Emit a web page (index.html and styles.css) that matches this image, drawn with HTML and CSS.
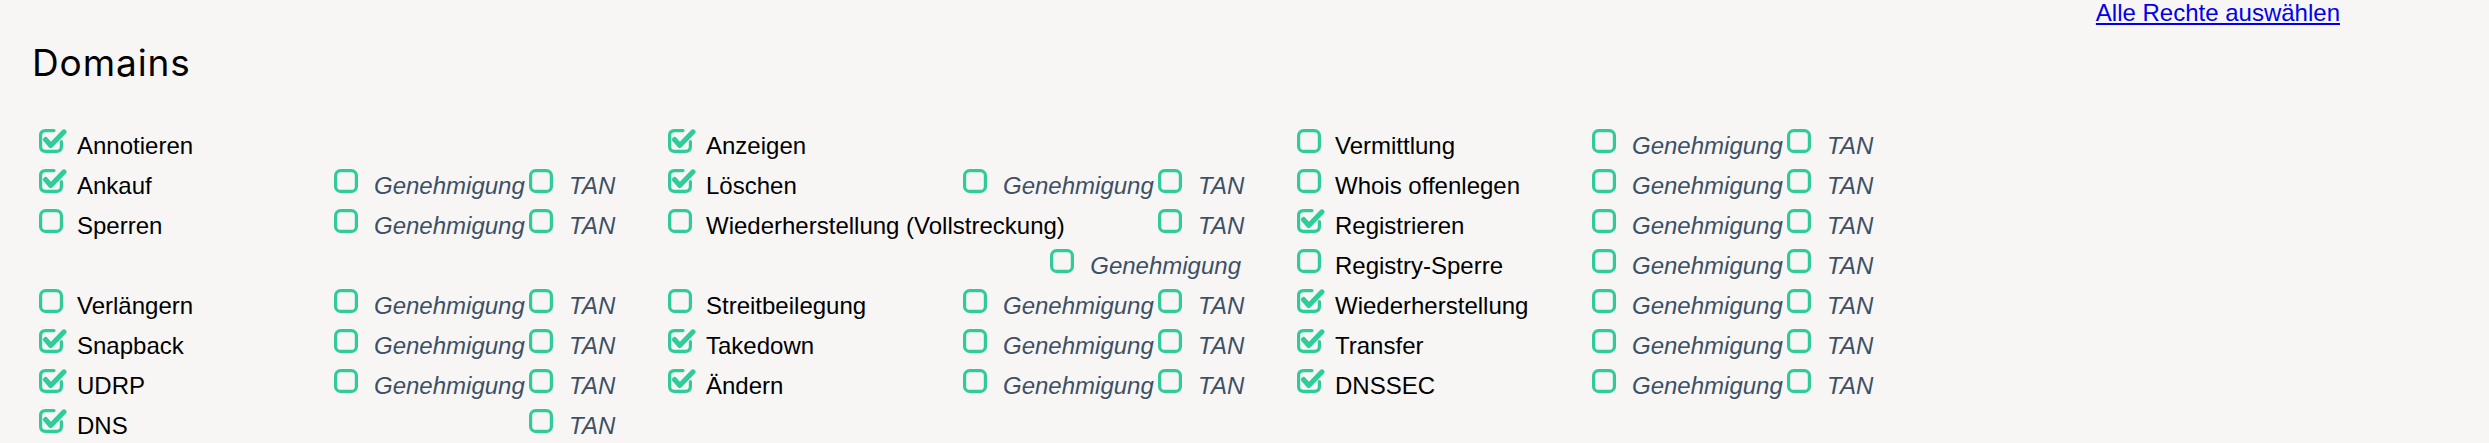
FILE: index.html
```html
<!DOCTYPE html>
<html lang="de">
<head>
  <meta charset="UTF-8" />
  <title>Domains – Rechte</title>
  <link rel="stylesheet" href="styles.css">
</head>
<body>
  <svg class="defs" width="0" height="0">
    <symbol id="on" viewBox="0 0 28 24">
      <path d="M15 1.6H6.5Q1.6 1.6 1.6 6.5V17.5Q1.6 22.4 6.5 22.4H17.5Q22.4 22.4 22.4 17.5V12.5" fill="none" stroke="currentColor" stroke-width="3.2" stroke-linecap="round"/>
      <path d="M6.5 10.5L11.8 16.5L25 2.8" fill="none" stroke="currentColor" stroke-width="5" stroke-linecap="round" stroke-linejoin="round"/>
    </symbol>
    <symbol id="off" viewBox="0 0 28 24">
      <rect x="1.6" y="1.6" width="20.8" height="20.8" rx="5" fill="none" stroke="currentColor" stroke-width="3.2"/>
    </symbol>
  </svg>

  <div class="top"><a href="#">Alle Rechte auswählen</a></div>
  <h1>Domains</h1>

  <div class="grid">
    <div class="col">
      <div class="row">
        <label class="right"><svg class="cb"><use href="#on"/></svg>Annotieren</label>
      </div>
      <div class="row">
        <label class="right"><svg class="cb"><use href="#on"/></svg>Ankauf</label>
        <span class="opt"><svg class="cb"><use href="#off"/></svg>Genehmigung</span>
        <span class="opt tan"><svg class="cb"><use href="#off"/></svg>TAN</span>
      </div>
      <div class="row">
        <label class="right"><svg class="cb"><use href="#off"/></svg>Sperren</label>
        <span class="opt"><svg class="cb"><use href="#off"/></svg>Genehmigung</span>
        <span class="opt tan"><svg class="cb"><use href="#off"/></svg>TAN</span>
      </div>
      <div class="row"></div>
      <div class="row">
        <label class="right"><svg class="cb"><use href="#off"/></svg>Verlängern</label>
        <span class="opt"><svg class="cb"><use href="#off"/></svg>Genehmigung</span>
        <span class="opt tan"><svg class="cb"><use href="#off"/></svg>TAN</span>
      </div>
      <div class="row">
        <label class="right"><svg class="cb"><use href="#on"/></svg>Snapback</label>
        <span class="opt"><svg class="cb"><use href="#off"/></svg>Genehmigung</span>
        <span class="opt tan"><svg class="cb"><use href="#off"/></svg>TAN</span>
      </div>
      <div class="row">
        <label class="right"><svg class="cb"><use href="#on"/></svg>UDRP</label>
        <span class="opt"><svg class="cb"><use href="#off"/></svg>Genehmigung</span>
        <span class="opt tan"><svg class="cb"><use href="#off"/></svg>TAN</span>
      </div>
      <div class="row">
        <label class="right"><svg class="cb"><use href="#on"/></svg>DNS</label>
        <span class="opt tan"><svg class="cb"><use href="#off"/></svg>TAN</span>
      </div>
    </div>

    <div class="col">
      <div class="row">
        <label class="right"><svg class="cb"><use href="#on"/></svg>Anzeigen</label>
      </div>
      <div class="row">
        <label class="right"><svg class="cb"><use href="#on"/></svg>Löschen</label>
        <span class="opt"><svg class="cb"><use href="#off"/></svg>Genehmigung</span>
        <span class="opt tan"><svg class="cb"><use href="#off"/></svg>TAN</span>
      </div>
      <div class="row wrap">
        <label class="right"><svg class="cb"><use href="#off"/></svg>Wiederherstellung (Vollstreckung)</label>
        <span class="opt tan"><svg class="cb"><use href="#off"/></svg>TAN</span>
        <span class="opt late"><svg class="cb"><use href="#off"/></svg>Genehmigung</span>
      </div>
      <div class="row">
        <label class="right"><svg class="cb"><use href="#off"/></svg>Streitbeilegung</label>
        <span class="opt"><svg class="cb"><use href="#off"/></svg>Genehmigung</span>
        <span class="opt tan"><svg class="cb"><use href="#off"/></svg>TAN</span>
      </div>
      <div class="row">
        <label class="right"><svg class="cb"><use href="#on"/></svg>Takedown</label>
        <span class="opt"><svg class="cb"><use href="#off"/></svg>Genehmigung</span>
        <span class="opt tan"><svg class="cb"><use href="#off"/></svg>TAN</span>
      </div>
      <div class="row">
        <label class="right"><svg class="cb"><use href="#on"/></svg>Ändern</label>
        <span class="opt"><svg class="cb"><use href="#off"/></svg>Genehmigung</span>
        <span class="opt tan"><svg class="cb"><use href="#off"/></svg>TAN</span>
      </div>
    </div>

    <div class="col">
      <div class="row">
        <label class="right"><svg class="cb"><use href="#off"/></svg>Vermittlung</label>
        <span class="opt"><svg class="cb"><use href="#off"/></svg>Genehmigung</span>
        <span class="opt tan"><svg class="cb"><use href="#off"/></svg>TAN</span>
      </div>
      <div class="row">
        <label class="right"><svg class="cb"><use href="#off"/></svg>Whois offenlegen</label>
        <span class="opt"><svg class="cb"><use href="#off"/></svg>Genehmigung</span>
        <span class="opt tan"><svg class="cb"><use href="#off"/></svg>TAN</span>
      </div>
      <div class="row">
        <label class="right"><svg class="cb"><use href="#on"/></svg>Registrieren</label>
        <span class="opt"><svg class="cb"><use href="#off"/></svg>Genehmigung</span>
        <span class="opt tan"><svg class="cb"><use href="#off"/></svg>TAN</span>
      </div>
      <div class="row">
        <label class="right"><svg class="cb"><use href="#off"/></svg>Registry-Sperre</label>
        <span class="opt"><svg class="cb"><use href="#off"/></svg>Genehmigung</span>
        <span class="opt tan"><svg class="cb"><use href="#off"/></svg>TAN</span>
      </div>
      <div class="row">
        <label class="right"><svg class="cb"><use href="#on"/></svg>Wiederherstellung</label>
        <span class="opt"><svg class="cb"><use href="#off"/></svg>Genehmigung</span>
        <span class="opt tan"><svg class="cb"><use href="#off"/></svg>TAN</span>
      </div>
      <div class="row">
        <label class="right"><svg class="cb"><use href="#on"/></svg>Transfer</label>
        <span class="opt"><svg class="cb"><use href="#off"/></svg>Genehmigung</span>
        <span class="opt tan"><svg class="cb"><use href="#off"/></svg>TAN</span>
      </div>
      <div class="row">
        <label class="right"><svg class="cb"><use href="#on"/></svg>DNSSEC</label>
        <span class="opt"><svg class="cb"><use href="#off"/></svg>Genehmigung</span>
        <span class="opt tan"><svg class="cb"><use href="#off"/></svg>TAN</span>
      </div>
    </div>
  </div>
</body>
</html>
```

FILE: styles.css
```css
body {
  font-family: "Liberation Sans", Arial, sans-serif;
  font-size: 24px;
  background: #f7f6f4;
  color: #000;
  margin: 0;
  padding: 0;
}
.defs { position: absolute; }
.top {
  display: flex;
  justify-content: flex-end;
  padding-right: 149px;
  height: 26px;
  line-height: 26px;
}
.top a { color: #0000ee; }
h1 {
  font-family: Inter, "Noto Sans", sans-serif;
  font-weight: 400;
  font-size: 37px;
  letter-spacing: 0.9px;
  line-height: 44px;
  margin: 15px 0 41px 32px;
}
.grid {
  display: flex;
  padding-left: 39px;
}
.col { width: 629px; flex: none; }
.row {
  display: grid;
  grid-template-columns: 295px 195px 88px;
  height: 40px;
  line-height: 40px;
  white-space: nowrap;
}
.right, .opt {
  display: flex;
  align-items: flex-start;
}
.cb {
  width: 28px;
  height: 24px;
  margin-top: 3px;
  margin-right: 10px;
  flex: none;
  color: #2fcb9a;
}
.opt .cb { margin-right: 12px; }
.opt {
  font-style: italic;
  color: #3e5064;
}
.tan { grid-column: 3; }
.row.wrap {
  height: 80px;
  grid-template-rows: 40px 40px;
}
.wrap .right { grid-column: 1 / 3; }
.wrap .tan { grid-row: 1; }
.wrap .late {
  grid-row: 2;
  grid-column: 1 / 4;
  justify-self: end;
  margin-right: 5px;
}
```
